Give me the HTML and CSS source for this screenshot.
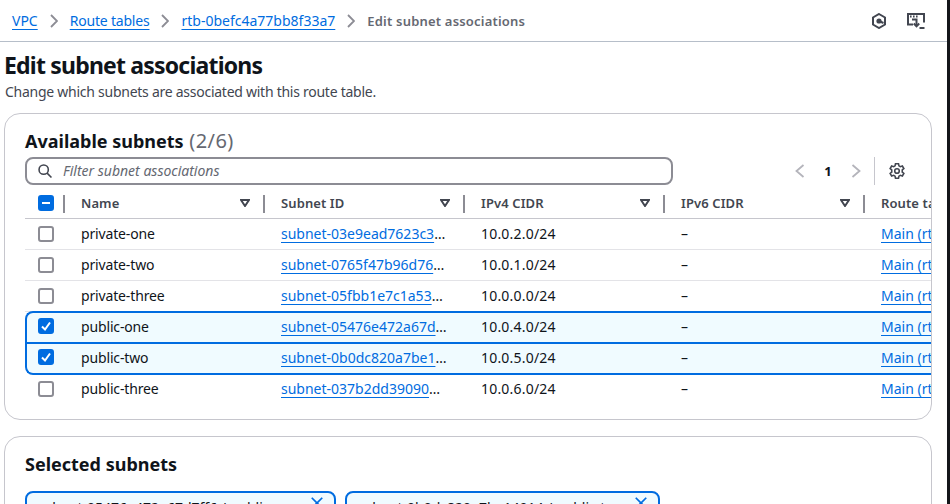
FILE: index.html
```html
<!DOCTYPE html>
<html lang="en">
<head>
    <meta charset="UTF-8">
    <meta name="viewport" content="width=device-width, initial-scale=1.0">
    <title>Edit subnet associations</title>
    <link rel="stylesheet" href="styles.css">
</head>
<body>
    <div class="page">
        <header class="topbar">
            <nav class="crumbs">
                <a href="#">VPC</a>
                <svg class="crumb-sep" viewBox="0 0 8 14"><path d="M1 1l6 6-6 6"/></svg>
                <a href="#" class="crumb-tight">Route tables</a>
                <svg class="crumb-sep" viewBox="0 0 8 14"><path d="M1 1l6 6-6 6"/></svg>
                <a href="#">rtb-0befc4a77bb8f33a7</a>
                <svg class="crumb-sep" viewBox="0 0 8 14"><path d="M1 1l6 6-6 6"/></svg>
                <span class="crumb-current">Edit subnet associations</span>
            </nav>
            <div class="top-icons">
                <svg class="icon-hex" viewBox="0 0 16 16"><path d="M8 1l6 3.5v7L8 15l-6-3.5v-7z"/><circle cx="8" cy="8" r="2.6" class="solid"/><path d="M8 8l4.5 2"/></svg>
                <svg class="icon-screen" viewBox="0 0 18 16"><path d="M6 11.5H1V1h16v8.5"/><path class="dots" d="M3 3.6h1.6M6 3.6h1.6M9 3.6h1.6"/><path d="M5 6.5h4.5v6"/><path d="M6.8 10.5l2.7 2.8 2.7-2.8"/><path d="M12.5 15h5"/></svg>
            </div>
        </header>

        <h1>Edit subnet associations</h1>
        <p class="subtitle">Change which subnets are associated with this route table.</p>

        <section class="card card-table">
            <h2>Available subnets <span class="count">(2/6)</span></h2>
            <div class="tools">
                <div class="filter">
                    <svg class="search" viewBox="0 0 16 16"><circle cx="6.5" cy="6.5" r="5.3"/><path d="M10.4 10.4L15.4 15.4"/></svg>
                    <span class="filter-text">Filter subnet associations</span>
                </div>
                <div class="pager">
                    <svg class="pager-arrow" viewBox="0 0 10 14"><path d="M8.5 1l-7 6 7 6"/></svg>
                    <span class="page-num">1</span>
                    <svg class="pager-arrow" viewBox="0 0 10 14"><path d="M1.5 1l7 6-7 6"/></svg>
                </div>
                <div class="settings">
                    <svg viewBox="1 1 14 14"><circle cx="8" cy="8" r="2"/><path d="M6.7 1.6h2.6l.4 1.9 1.2.7 1.8-.6 1.3 2.2-1.4 1.3v1.8l1.4 1.3-1.3 2.2-1.8-.6-1.2.7-.4 1.9H6.7l-.4-1.9-1.2-.7-1.8.6-1.3-2.2L3.4 8.9V7.1L2 5.8l1.3-2.2 1.8.6 1.2-.7z"/></svg>
                </div>
            </div>
            <div class="table-wrap">
                <div class="row head">
                    <div class="cell-check"><span class="box on"><i class="dash"></i></span></div>
                    <div class="col">Name<svg class="sort" viewBox="0 0 10 8"><path d="M1 1h8L5 7z"/></svg></div>
                    <div class="col">Subnet ID<svg class="sort" viewBox="0 0 10 8"><path d="M1 1h8L5 7z"/></svg></div>
                    <div class="col">IPv4 CIDR<svg class="sort" viewBox="0 0 10 8"><path d="M1 1h8L5 7z"/></svg></div>
                    <div class="col">IPv6 CIDR<svg class="sort" viewBox="0 0 10 8"><path d="M1 1h8L5 7z"/></svg></div>
                    <div class="col">Route table</div>
                </div>
                <div class="row">
                    <div class="cell-check"><span class="box"></span></div>
                    <div class="cell name">private-one</div>
                    <div class="cell"><a href="#">subnet-03e9ead7623c3</a>…</div>
                    <div class="cell cidr">10.0.2.0/24</div>
                    <div class="cell">–</div>
                    <div class="cell"><a href="#">Main (rtb-0befc4a77)</a></div>
                </div>
                <div class="row">
                    <div class="cell-check"><span class="box"></span></div>
                    <div class="cell name">private-two</div>
                    <div class="cell"><a href="#">subnet-0765f47b96d76</a>…</div>
                    <div class="cell cidr">10.0.1.0/24</div>
                    <div class="cell">–</div>
                    <div class="cell"><a href="#">Main (rtb-0befc4a77)</a></div>
                </div>
                <div class="row">
                    <div class="cell-check"><span class="box"></span></div>
                    <div class="cell name">private-three</div>
                    <div class="cell"><a href="#">subnet-05fbb1e7c1a53</a>…</div>
                    <div class="cell cidr">10.0.0.0/24</div>
                    <div class="cell">–</div>
                    <div class="cell"><a href="#">Main (rtb-0befc4a77)</a></div>
                </div>
                <div class="row picked first-picked">
                    <div class="cell-check"><span class="box on"><svg viewBox="0 0 14 14"><path d="M3 7.5l3 3 5-7"/></svg></span></div>
                    <div class="cell name">public-one</div>
                    <div class="cell"><a href="#">subnet-05476e472a67d</a>…</div>
                    <div class="cell cidr">10.0.4.0/24</div>
                    <div class="cell">–</div>
                    <div class="cell"><a href="#">Main (rtb-0befc4a77)</a></div>
                </div>
                <div class="row picked last-picked">
                    <div class="cell-check"><span class="box on"><svg viewBox="0 0 14 14"><path d="M3 7.5l3 3 5-7"/></svg></span></div>
                    <div class="cell name">public-two</div>
                    <div class="cell"><a href="#">subnet-0b0dc820a7be1</a>…</div>
                    <div class="cell cidr">10.0.5.0/24</div>
                    <div class="cell">–</div>
                    <div class="cell"><a href="#">Main (rtb-0befc4a77)</a></div>
                </div>
                <div class="row no-line">
                    <div class="cell-check"><span class="box"></span></div>
                    <div class="cell name">public-three</div>
                    <div class="cell"><a href="#">subnet-037b2dd39090</a>…</div>
                    <div class="cell cidr">10.0.6.0/24</div>
                    <div class="cell">–</div>
                    <div class="cell"><a href="#">Main (rtb-0befc4a77)</a></div>
                </div>
            </div>
        </section>

        <section class="card card-selected">
            <h2>Selected subnets</h2>
            <div class="chips">
                <div class="chip"><span class="chip-text">subnet-05476e472a67d7ff6 / public-one</span><svg viewBox="0 0 16 16"><path d="M2 2l12 12M14 2L2 14"/></svg></div>
                <div class="chip"><span class="chip-text">subnet-0b0dc820a7be14914 / public-two</span><svg viewBox="0 0 16 16"><path d="M2 2l12 12M14 2L2 14"/></svg></div>
            </div>
        </section>
    </div>
    <div class="desk-edge"></div>
</body>
</html>
```

FILE: styles.css
```css
html, body {
    height: 100%;
}
body {
    margin: 0;
    display: flex;
    height: 504px;
    overflow: hidden;
    background: #fff;
    color: #0f141a;
    font-family: "Noto Sans", sans-serif;
    font-size: 14px;
}
.page {
    width: 947px;
    flex: none;
    overflow: hidden;
}
.desk-edge {
    flex: 1;
    background: #14161a;
}
a {
    color: #006ce0;
    text-decoration: underline;
    text-underline-offset: 3px;
}
svg {
    fill: none;
    stroke: currentColor;
}

/* breadcrumb bar */
.topbar {
    display: flex;
    align-items: center;
    justify-content: space-between;
    height: 41px;
    padding: 0 22px 0 12px;
    border-bottom: 1px solid #b6bec9;
}
.crumbs {
    display: flex;
    align-items: center;
    font-size: 14px;
    line-height: 18px;
}
.crumb-tight {
    letter-spacing: -0.2px;
}
.crumb-sep {
    width: 8px;
    height: 14px;
    margin: 0 12px;
    color: #8c8c94;
    stroke-width: 1.8;
}
.crumb-current {
    color: #656871;
    font-size: 13px;
    font-weight: 600;
    letter-spacing: 0.2px;
}
.top-icons {
    display: flex;
    align-items: center;
    gap: 20px;
    color: #424650;
}
.top-icons svg {
    stroke-width: 2;
}
.icon-hex {
    width: 16px;
    height: 16px;
}
.icon-hex .solid {
    fill: #424650;
    stroke: none;
}
.icon-screen {
    width: 18px;
    height: 16px;
}

h1 {
    margin: 8px 0 0 4px;
    font-size: 23px;
    line-height: 30px;
    font-weight: 700;
    letter-spacing: -0.8px;
}
.subtitle {
    margin: 3px 0 0 5px;
    font-size: 14px;
    line-height: 18px;
    letter-spacing: -0.26px;
    color: #424650;
}

/* cards */
.card {
    box-sizing: border-box;
    margin: 12px 15px 0 4px;
    border: 1px solid #c6c6cd;
    border-radius: 16px;
    background: #fff;
}
.card-table {
    height: 307px;
    padding: 15px 0 0 20px;
    overflow: hidden;
}
.card-selected {
    margin-top: 16px;
    padding: 15px 20px 0;
    height: 100px;
}
h2 {
    margin: 0;
    font-size: 18px;
    line-height: 24px;
    font-weight: 700;
}
.count {
    margin-left: 1px;
    color: #656871;
    font-size: 20px;
    line-height: 1;
    letter-spacing: 0.4px;
    font-weight: 400;
}
.tools {
    display: flex;
    align-items: center;
    height: 28px;
    margin-top: 4px;
}
.filter {
    display: flex;
    align-items: center;
    gap: 10px;
    box-sizing: border-box;
    width: 648px;
    height: 28px;
    padding-left: 11px;
    border: 2px solid #8c8c94;
    border-radius: 8px;
    font-size: 14px;
    font-style: italic;
    color: #656871;
}
.filter-text {
    margin: -2px 0 0 1px;
}
.search {
    width: 14px;
    height: 14px;
    color: #424650;
    stroke-width: 1.8;
}
.pager {
    display: flex;
    align-items: center;
    margin-left: 122px;
    height: 28px;
}
.pager-arrow {
    width: 10px;
    height: 14px;
    color: #b4b4bb;
    stroke-width: 1.8;
}
.page-num {
    width: 46px;
    text-align: center;
    font-size: 13px;
    font-weight: 700;
}
.settings {
    display: flex;
    align-items: center;
    height: 28px;
    margin-left: 13px;
    padding-left: 14px;
    border-left: 1px solid #c6c6cd;
    color: #424650;
}
.settings svg {
    width: 16px;
    height: 16px;
    stroke-width: 1.4;
}

/* table */
.table-wrap {
    margin-top: 2px;
    overflow: hidden;
}
.row {
    display: flex;
    align-items: center;
    box-sizing: border-box;
    width: 1100px;
    height: 31px;
    border-bottom: 1px solid #e3e3e7;
}
.row.head {
    height: 32px;
    border-bottom: 1px solid #c6c6cd;
    color: #424650;
    font-size: 13px;
    font-weight: 600;
    letter-spacing: 0.1px;
}
.row.no-line {
    border-bottom-color: transparent;
}
.row.picked {
    background: #f0fbff;
    border: 2px solid #006ce0;
    border-right: none;
    height: 32px;
    padding-bottom: 1px;
}
.row.first-picked {
    border-top-left-radius: 8px;
    margin-top: -1px;
    border-bottom-width: 1px;
}
.row.last-picked {
    border-bottom-left-radius: 8px;
    margin-bottom: -1px;
    border-top-width: 1px;
}
.row.picked .cell-check {
    margin-left: -2px;
    margin-top: -2px;
}
.cell-check {
    flex: none;
    width: 56px;
    padding-left: 13px;
    box-sizing: border-box;
    display: flex;
}
.box {
    display: flex;
    align-items: center;
    justify-content: center;
    box-sizing: border-box;
    width: 16px;
    height: 16px;
    border: 2px solid #8c8c94;
    border-radius: 3px;
    background: #fff;
}
.box.on {
    background: #006ce0;
    border-color: #006ce0;
}
.box svg {
    width: 14px;
    height: 14px;
    flex: none;
    color: #fff;
    stroke-width: 2;
}
.dash {
    width: 8px;
    height: 2px;
    background: #fff;
}
.col {
    position: relative;
    display: flex;
    align-items: center;
    justify-content: space-between;
    flex: none;
    box-sizing: border-box;
    width: 200px;
    padding-right: 31px;
    white-space: nowrap;
}
.col::before {
    content: "";
    position: absolute;
    left: -18px;
    top: 1px;
    height: 18px;
    width: 2px;
    background: #8c8c94;
}
.cell {
    flex: none;
    box-sizing: border-box;
    width: 200px;
    padding-bottom: 1px;
    white-space: nowrap;
}
.cell.name {
    letter-spacing: -0.15px;
}
.cell.cidr {
    letter-spacing: 0.2px;
}
.sort {
    width: 10px;
    height: 8px;
    color: #424650;
    stroke-width: 2;
}

/* selected chips, cut off by the window */
.chips {
    display: flex;
    gap: 9px;
    margin-top: 15px;
}
.chip {
    display: flex;
    align-items: flex-start;
    justify-content: space-between;
    box-sizing: border-box;
    width: 311px;
    height: 34px;
    padding: 3px 10px 0 10px;
    border: 2px solid #006ce0;
    border-radius: 8px;
    background: #f0fbff;
    white-space: nowrap;
}
.chip-text {
    margin-top: 2px;
}
.chip + .chip {
    width: 315px;
}
.chip svg {
    width: 14px;
    height: 14px;
    color: #006ce0;
    stroke-width: 2;
}
```
